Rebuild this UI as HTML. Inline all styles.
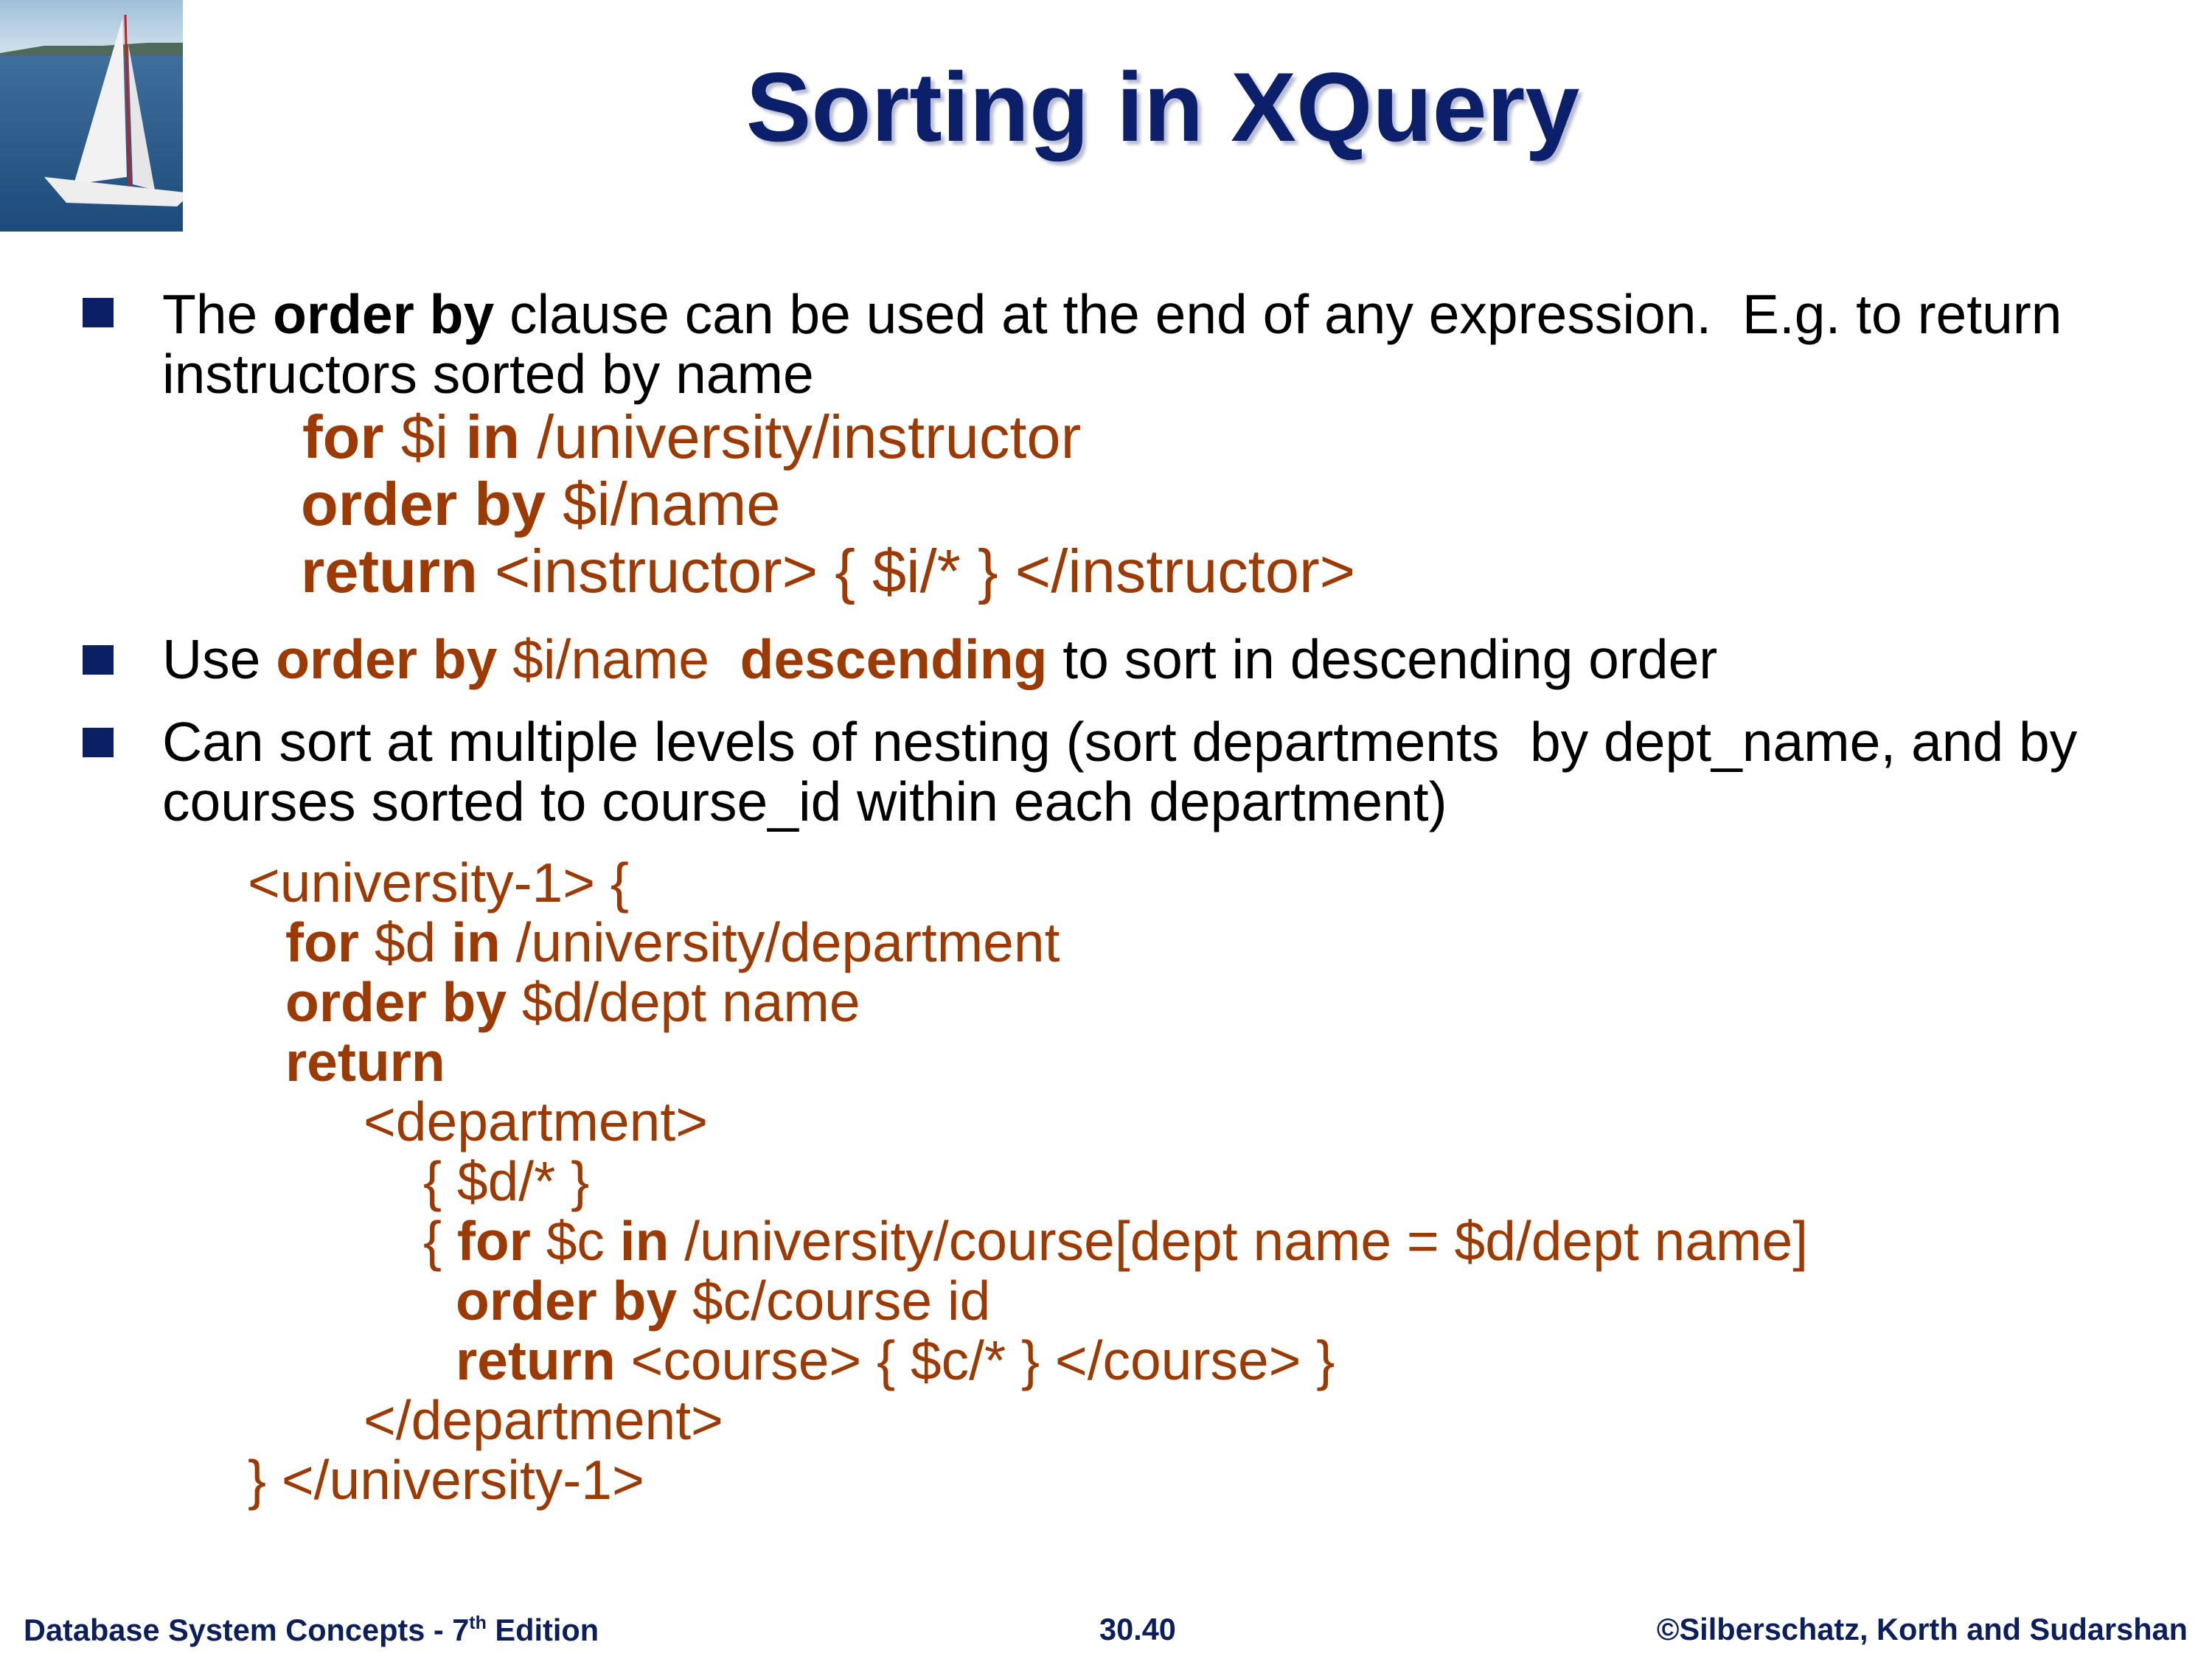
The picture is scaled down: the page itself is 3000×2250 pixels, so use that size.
<!DOCTYPE html>
<html><head><meta charset="utf-8"><style>
body{margin:0;width:3000px;height:2250px;background:#fff;position:relative;overflow:hidden;font-family:"Liberation Sans",Arial,sans-serif}
.l{position:absolute;white-space:pre;line-height:1}
.b{font-size:75px;color:#000}
.c{color:#9c3a02}
.c b,.b b{font-weight:bold}
.k{font-size:83px}
.d{font-size:75px}
.sq{position:absolute;width:42px;height:40px;background:#0a1f66}
.f{position:absolute;top:2189px;font-size:41.5px;font-weight:bold;color:#0a1f5c;line-height:1}
</style></head><body>
<svg style="position:absolute;left:0;top:0" width="248" height="314" viewBox="0 0 248 314">
<defs><linearGradient id="s" x1="0" y1="0" x2="0" y2="1"><stop offset="0" stop-color="#9fc0da"/><stop offset="1" stop-color="#d6e4ee"/></linearGradient>
<linearGradient id="w" x1="0" y1="0" x2="0" y2="1"><stop offset="0" stop-color="#3f6f9c"/><stop offset="1" stop-color="#1d4a7a"/></linearGradient></defs>
<rect width="248" height="80" fill="url(#s)"/>
<path d="M0 72 L60 62 L140 62 L200 58 L248 58 L248 80 L0 80Z" fill="#4f6a5a"/>
<rect y="76" width="248" height="238" fill="url(#w)"/>
<path d="M166 25 L172 240 L100 250 Z" fill="#f2f2f2"/>
<path d="M174 60 L180 250 L210 258 Z" fill="#e6e6e6"/>
<line x1="170" y1="20" x2="176" y2="255" stroke="#c02020" stroke-width="3"/>
<path d="M60 240 L260 262 L240 280 L90 275 Z" fill="#eeeeee"/>
</svg>
<div class="l" style="left:0;width:3000px;top:80px;text-align:center;padding-left:154px;box-sizing:border-box;font-size:133px;font-weight:bold;color:#0b1f6b;text-shadow:5px 5px 4px #b8bcd0">Sorting in XQuery</div>

<div class="sq" style="left:112px;top:404px"></div>
<div class="l b" style="left:220px;top:389px">The <b>order by</b> clause can be used at the end of any expression.  E.g. to return</div>
<div class="l b" style="left:220px;top:470px">instructors sorted by name</div>
<div class="l c k" style="left:410px;top:551px"><b>for</b> $i <b>in</b> /university/instructor</div>
<div class="l c k" style="left:408px;top:642px"><b>order by</b> $i/name</div>
<div class="l c k" style="left:408px;top:733px"><b>return</b> &lt;instructor&gt; { $i/* } &lt;/instructor&gt;</div>

<div class="sq" style="left:112px;top:875px"></div>
<div class="l b" style="left:220px;top:857px">Use <span class="c"><b>order by</b> $i/name  <b>descending</b></span> to sort in descending order</div>

<div class="sq" style="left:112px;top:987px"></div>
<div class="l b" style="left:220px;top:969px">Can sort at multiple levels of nesting (sort departments  by dept_name, and by</div>
<div class="l b" style="left:220px;top:1050px">courses sorted to course_id within each department)</div>

<div class="l c d" style="left:336px;top:1160px">&lt;university-1&gt; {</div>
<div class="l c d" style="left:387px;top:1241px"><b>for</b> $d <b>in</b> /university/department</div>
<div class="l c d" style="left:387px;top:1322px"><b>order by</b> $d/dept name</div>
<div class="l c d" style="left:387px;top:1403px"><b>return</b></div>
<div class="l c d" style="left:493px;top:1484px">&lt;department&gt;</div>
<div class="l c d" style="left:574px;top:1565px">{ $d/* }</div>
<div class="l c d" style="left:574px;top:1646px">{ <b>for</b> $c <b>in</b> /university/course[dept name = $d/dept name]</div>
<div class="l c d" style="left:618px;top:1727px"><b>order by</b> $c/course id</div>
<div class="l c d" style="left:618px;top:1808px"><b>return</b> &lt;course&gt; { $c/* } &lt;/course&gt; }</div>
<div class="l c d" style="left:493px;top:1889px">&lt;/department&gt;</div>
<div class="l c d" style="left:336px;top:1970px">} &lt;/university-1&gt;</div>

<div class="f" style="left:32px">Database System Concepts - 7<sup style="font-size:25px;vertical-align:16px">th</sup> Edition</div>
<div class="f" style="left:1491px">30.40</div>
<div class="f" style="right:33px">©Silberschatz, Korth and Sudarshan</div>
</body></html>
